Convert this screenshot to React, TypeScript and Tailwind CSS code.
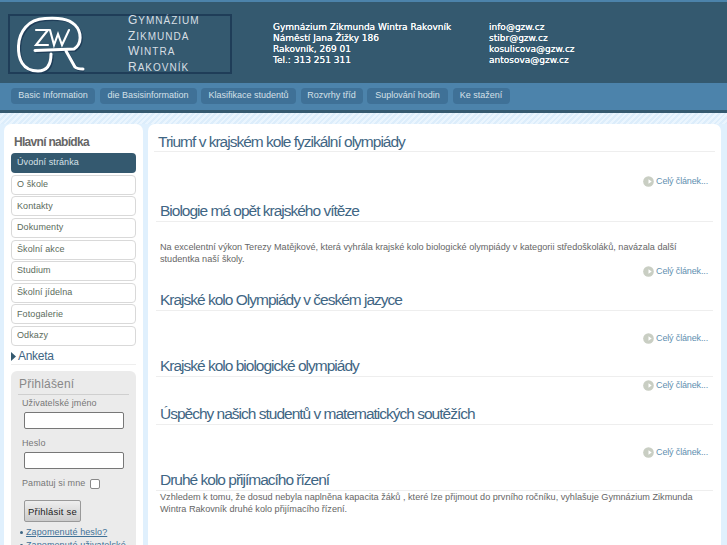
import React from 'react';

const navItems = [
  { label: 'Basic Information', w: 'w-[84px]' },
  { label: 'die Basisinformation', w: 'w-[97px]' },
  { label: 'Klasifikace studentů', w: 'w-[95px]' },
  { label: 'Rozvrhy tříd', w: 'w-[62px]' },
  { label: 'Suplování hodin', w: 'w-[81px]' },
  { label: 'Ke stažení', w: 'w-[57px]' },
];

const menuItems = ['O škole', 'Kontakty', 'Dokumenty', 'Školní akce', 'Studium', 'Školní jídelna', 'Fotogalerie', 'Odkazy'];

function ReadMore({ className }: { className: string }) {
  return (
    <div className={`flex items-center justify-end gap-[2px] pr-[13px] text-[9px] leading-[12px] tracking-[-0.15px] text-[#5f8fb0] ${className}`}>
      <svg width="11" height="11" viewBox="0 0 12 12">
        <circle cx="6" cy="6" r="5.8" fill="#c9cec3" />
        <path d="M2.5 6h3.5V3.5L9.5 6 6 8.5V6" fill="#fff" />
      </svg>
      <span>Celý článek...</span>
    </div>
  );
}

function ArticleTitle({ children, className = '' }: { children: React.ReactNode; className?: string }) {
  return (
    <h2 className={`mx-[8px] h-[20px] border-b border-[#eeeeee] pl-[4px] text-[15.5px] leading-[17px] tracking-[-1px] text-[#3f6684] ${className}`}>
      {children}
    </h2>
  );
}

function Logo() {
  const gPath = 'M43 42C43 52 40 59 30 59 14 59 10 46 10.5 34 11 20 20 7 37 6.5 50 6 60 6 67 13 74 20 74 32 66 37L27 38.5';
  const legPath = 'M58 39L67 55C69 57 72 57 75 57';
  return (
    <svg width="70" height="56" viewBox="2 4 70 56" className="shrink-0 overflow-visible">
      <g fill="none" stroke="#1f3d58" strokeWidth="3" transform="translate(1.2 1.2)">
        <path d={gPath} />
        <path d={legPath} />
      </g>
      <g fill="none" stroke="#fff" strokeLinecap="round">
        <path d={gPath} strokeWidth="3" />
        <path d={legPath} strokeWidth="3" />
        <path d="M28 18H40L28 33H40" strokeWidth="2.1" />
        <path d="M42 18L46 33 50 22 54 33 61 18" strokeWidth="2.1" />
      </g>
    </svg>
  );
}

export default function App() {
  return (
    <div className="h-[545px] w-[727px] overflow-hidden bg-[#e0f0fd] font-['Liberation_Sans',sans-serif]">
      <header className="h-[83px] border-t-[2px] border-[#4c83ab] bg-[#34596f] pt-[12px] pl-[8px]">
        <div className="flex font-['DejaVu_Sans',sans-serif] text-[9px] leading-[11px] text-white">
          <div className="flex h-[60px] w-[224px] items-center border-2 border-[#1f3d58]">
            <Logo />
            <div className="ml-[48px] font-['Liberation_Sans',sans-serif] text-[12px] leading-[14.5px] tracking-[1px] text-[#d7dfe4]">
              <div>G<span className="text-[10px]">YMNÁZIUM</span></div>
              <div>Z<span className="text-[10px]">IKMUNDA</span></div>
              <div>W<span className="text-[10px]">INTRA</span></div>
              <div>R<span className="text-[10px]">AKOVNÍK</span></div>
            </div>
          </div>
          <div className="mt-[8px] ml-[41px] w-[216px] [text-shadow:0_0_0.5px_#fff]">
            <div>Gymnázium Zikmunda Wintra Rakovník</div>
            <div>Náměstí Jana Žižky 186</div>
            <div>Rakovník, 269 01</div>
            <div>Tel.: 313 251 311</div>
          </div>
          <div className="mt-[8px] [text-shadow:0_0_0.5px_#fff]">
            <div>info@gzw.cz</div>
            <div>stibr@gzw.cz</div>
            <div>kosulicova@gzw.cz</div>
            <div>antosova@gzw.cz</div>
          </div>
        </div>
      </header>

      <nav className="flex h-[30px] gap-[4.5px] border-b-[3px] border-[#34596f] bg-[#4c83ab] pt-[5px] pl-[11px]">
        {navItems.map((item) => (
          <div
            key={item.label}
            className={`flex h-[16px] items-center justify-center rounded-[4px] bg-[#3f7197] text-[9px] text-[#d5e0e8] ${item.w}`}
          >
            {item.label}
          </div>
        ))}
      </nav>

      <div className="h-[11px] bg-[repeating-linear-gradient(135deg,#dcedfb_0px,#dcedfb_2px,#eaf5fe_2px,#eaf5fe_4px)]" />

      <div className="flex gap-[5px] pl-[4px]">
        <aside className="h-[500px] w-[139px] rounded-[7px] bg-white pt-[10px]">
          <div className="pl-[10px] text-[12px] leading-[16px] font-bold tracking-[-0.7px] text-[#666]">Hlavní nabídka</div>
          <div className="mt-[3px] flex flex-col gap-[1.65px] px-[7px] text-[9px] tracking-[0.1px]">
            <div className="flex h-[20px] items-center rounded-[4px] bg-[#34596f] pl-[6px] text-[#d8e2e8]">Úvodní stránka</div>
            {menuItems.map((item) => (
              <div key={item} className="flex h-[20px] items-center rounded-[4px] border border-[#d9d9d9] pl-[5px] text-[#5b6b5b]">
                {item}
              </div>
            ))}
          </div>
          <div className="mx-[7px] mt-[2px] flex h-[17px] items-center border-b border-[#eeeeee] text-[12px] tracking-[-0.3px] text-[#3f6684]">
            <svg width="5" height="9" viewBox="0 0 5 9" className="mr-[2px]"><path d="M0 0l5 4.5L0 9z" fill="#34596f" /></svg>
            Anketa
          </div>
          <div className="mx-[7px] mt-[6px] h-[200px] rounded-[6px] bg-[#ebebeb] px-[7px] pt-[5px] text-[9px] leading-[13px] tracking-[0.1px] text-[#777]">
            <div className="h-[19px] border-b border-[#cfcfcf] pl-[1px] text-[12px] leading-[16px] tracking-[0.2px] text-[#888]">Přihlášení</div>
            <div className="mt-[2px] pl-[4px]">Uživatelské jméno</div>
            <div className="mt-[2px] ml-[6px] h-[17px] w-[100px] rounded-[2px] border border-[#777] bg-white" />
            <div className="mt-[8px] pl-[4px]">Heslo</div>
            <div className="mt-[2px] ml-[6px] h-[17px] w-[100px] rounded-[2px] border border-[#777] bg-white" />
            <div className="mt-[8px] flex items-center pl-[4px]">
              Pamatuj si mne
              <span className="ml-[5px] h-[10px] w-[10px] rounded-[2px] border border-[#888] bg-white" />
            </div>
            <div className="mt-[10px] ml-[6px] flex h-[22px] w-[57px] items-center justify-center rounded-[2px] border border-[#999] bg-gradient-to-b from-[#eeeeee] to-[#cccccc] text-[9.5px] tracking-[0.2px] text-[#222]">Přihlásit se</div>
            <div className="mt-[4px] flex items-center gap-[3px] pl-[2px] text-[#3f7197] underline">
              <span className="h-[3px] w-[3px] rounded-full bg-[#3f6684]" />
              Zapomenuté heslo?
            </div>
            <div className="flex items-center gap-[3px] pl-[2px] text-[#3f7197] underline">
              <span className="h-[3px] w-[3px] rounded-full bg-[#3f6684]" />
              Zapomenuté uživatelské
            </div>
          </div>
        </aside>

        <main className="h-[500px] w-[573px] rounded-[7px] bg-white pt-[9px]">
          <h2 className="mx-[6px] h-[19px] border-b border-[#eeeeee] pl-[4px] text-[15.5px] leading-[17px] tracking-[-1px] text-[#3f6684]">Triumf v krajském kole fyzikální olympiády</h2>
          <ReadMore className="mt-[23px]" />
          <ArticleTitle className="mt-[15px]">Biologie má opět krajského vítěze</ArticleTitle>
          <p className="mt-[19px] mr-[12px] ml-[12px] text-[9.15px] leading-[12px] text-[#666]">
            Na excelentní výkon Terezy Matějkové, která vyhrála krajské kolo biologické olympiády v kategorii středoškoláků, navázala další studentka naší školy.
          </p>
          <ReadMore className="mt-[0px]" />
          <ArticleTitle className="mt-[14px]">Krajské kolo Olympiády v českém jazyce</ArticleTitle>
          <ReadMore className="mt-[21px]" />
          <ArticleTitle className="mt-[13px]">Krajské kolo biologické olympiády</ArticleTitle>
          <ReadMore className="mt-[2px]" />
          <ArticleTitle className="mt-[14px]">Úspěchy našich studentů v matematických soutěžích</ArticleTitle>
          <ReadMore className="mt-[21px]" />
          <ArticleTitle className="mt-[13px]">Druhé kolo přijímacího řízení</ArticleTitle>
          <p className="mt-[0px] mr-[12px] ml-[12px] text-[9.15px] leading-[12px] text-[#666]">
            Vzhledem k tomu, že dosud nebyla naplněna kapacita žáků , které lze  přijmout do prvního ročníku, vyhlašuje Gymnázium Zikmunda Wintra Rakovník druhé kolo přijímacího řízení.
          </p>
        </main>
      </div>
    </div>
  );
}
